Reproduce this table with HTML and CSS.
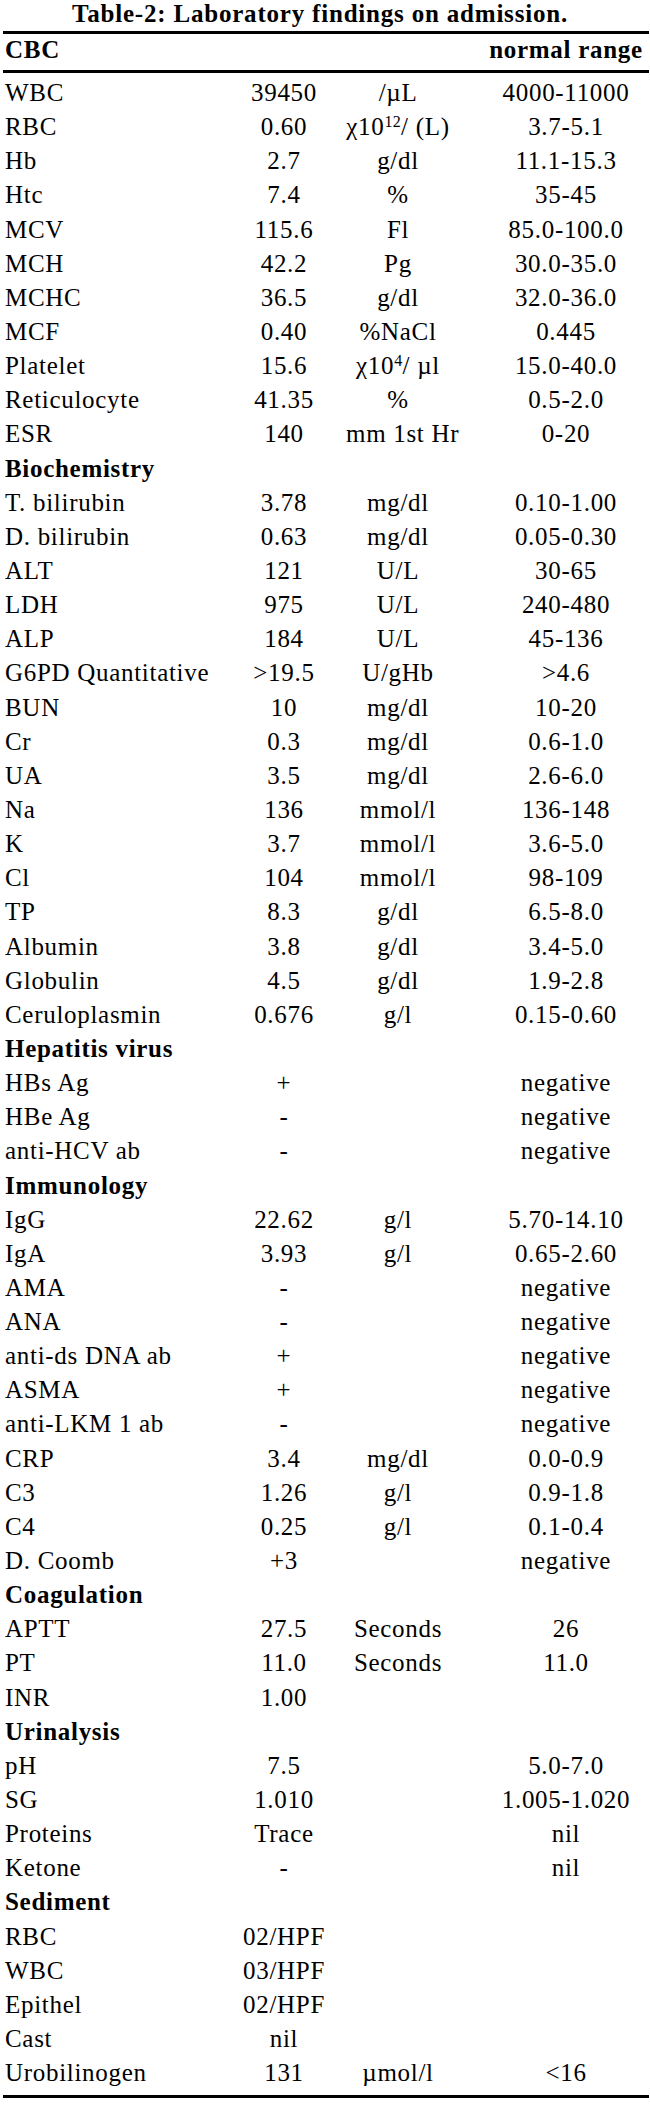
FILE: index.html
```html
<!DOCTYPE html>
<html lang="en">
<head>
<meta charset="utf-8">
<title>Table-2: Laboratory findings on admission.</title>
<link rel="stylesheet" href="styles.css">
</head>
<body>
<div class="sheet">
  <div class="title">Table-2: Laboratory findings on admission.</div>
  <div class="head row">
    <span class="name">CBC</span><span></span><span></span><span class="range">normal range</span>
  </div>
  <div class="body">
    <div class="row"><span class="name">WBC</span><span class="val">39450</span><span class="unit">/µL</span><span class="range">4000-11000</span></div>
    <div class="row"><span class="name">RBC</span><span class="val">0.60</span><span class="unit">χ10<span class="sup">12</span>/ (L)</span><span class="range">3.7-5.1</span></div>
    <div class="row"><span class="name">Hb</span><span class="val">2.7</span><span class="unit">g/dl</span><span class="range">11.1-15.3</span></div>
    <div class="row"><span class="name">Htc</span><span class="val">7.4</span><span class="unit">%</span><span class="range">35-45</span></div>
    <div class="row"><span class="name">MCV</span><span class="val">115.6</span><span class="unit">Fl</span><span class="range">85.0-100.0</span></div>
    <div class="row"><span class="name">MCH</span><span class="val">42.2</span><span class="unit">Pg</span><span class="range">30.0-35.0</span></div>
    <div class="row"><span class="name">MCHC</span><span class="val">36.5</span><span class="unit">g/dl</span><span class="range">32.0-36.0</span></div>
    <div class="row"><span class="name">MCF</span><span class="val">0.40</span><span class="unit">%NaCl</span><span class="range">0.445</span></div>
    <div class="row"><span class="name">Platelet</span><span class="val">15.6</span><span class="unit">χ10<span class="sup">4</span>/ µl</span><span class="range">15.0-40.0</span></div>
    <div class="row"><span class="name">Reticulocyte</span><span class="val">41.35</span><span class="unit">%</span><span class="range">0.5-2.0</span></div>
    <div class="row"><span class="name">ESR</span><span class="val">140</span><span class="unit">mm 1st Hr</span><span class="range">0-20</span></div>
    <div class="row section"><span class="name">Biochemistry</span></div>
    <div class="row"><span class="name">T. bilirubin</span><span class="val">3.78</span><span class="unit">mg/dl</span><span class="range">0.10-1.00</span></div>
    <div class="row"><span class="name">D. bilirubin</span><span class="val">0.63</span><span class="unit">mg/dl</span><span class="range">0.05-0.30</span></div>
    <div class="row"><span class="name">ALT</span><span class="val">121</span><span class="unit">U/L</span><span class="range">30-65</span></div>
    <div class="row"><span class="name">LDH</span><span class="val">975</span><span class="unit">U/L</span><span class="range">240-480</span></div>
    <div class="row"><span class="name">ALP</span><span class="val">184</span><span class="unit">U/L</span><span class="range">45-136</span></div>
    <div class="row"><span class="name">G6PD Quantitative</span><span class="val">&gt;19.5</span><span class="unit">U/gHb</span><span class="range">&gt;4.6</span></div>
    <div class="row"><span class="name">BUN</span><span class="val">10</span><span class="unit">mg/dl</span><span class="range">10-20</span></div>
    <div class="row"><span class="name">Cr</span><span class="val">0.3</span><span class="unit">mg/dl</span><span class="range">0.6-1.0</span></div>
    <div class="row"><span class="name">UA</span><span class="val">3.5</span><span class="unit">mg/dl</span><span class="range">2.6-6.0</span></div>
    <div class="row"><span class="name">Na</span><span class="val">136</span><span class="unit">mmol/l</span><span class="range">136-148</span></div>
    <div class="row"><span class="name">K</span><span class="val">3.7</span><span class="unit">mmol/l</span><span class="range">3.6-5.0</span></div>
    <div class="row"><span class="name">Cl</span><span class="val">104</span><span class="unit">mmol/l</span><span class="range">98-109</span></div>
    <div class="row"><span class="name">TP</span><span class="val">8.3</span><span class="unit">g/dl</span><span class="range">6.5-8.0</span></div>
    <div class="row"><span class="name">Albumin</span><span class="val">3.8</span><span class="unit">g/dl</span><span class="range">3.4-5.0</span></div>
    <div class="row"><span class="name">Globulin</span><span class="val">4.5</span><span class="unit">g/dl</span><span class="range">1.9-2.8</span></div>
    <div class="row"><span class="name">Ceruloplasmin</span><span class="val">0.676</span><span class="unit">g/l</span><span class="range">0.15-0.60</span></div>
    <div class="row section"><span class="name">Hepatitis virus</span></div>
    <div class="row"><span class="name">HBs Ag</span><span class="val">+</span><span class="unit"></span><span class="range">negative</span></div>
    <div class="row"><span class="name">HBe Ag</span><span class="val">-</span><span class="unit"></span><span class="range">negative</span></div>
    <div class="row"><span class="name">anti-HCV ab</span><span class="val">-</span><span class="unit"></span><span class="range">negative</span></div>
    <div class="row section"><span class="name">Immunology</span></div>
    <div class="row"><span class="name">IgG</span><span class="val">22.62</span><span class="unit">g/l</span><span class="range">5.70-14.10</span></div>
    <div class="row"><span class="name">IgA</span><span class="val">3.93</span><span class="unit">g/l</span><span class="range">0.65-2.60</span></div>
    <div class="row"><span class="name">AMA</span><span class="val">-</span><span class="unit"></span><span class="range">negative</span></div>
    <div class="row"><span class="name">ANA</span><span class="val">-</span><span class="unit"></span><span class="range">negative</span></div>
    <div class="row"><span class="name">anti-ds DNA ab</span><span class="val">+</span><span class="unit"></span><span class="range">negative</span></div>
    <div class="row"><span class="name">ASMA</span><span class="val">+</span><span class="unit"></span><span class="range">negative</span></div>
    <div class="row"><span class="name">anti-LKM 1 ab</span><span class="val">-</span><span class="unit"></span><span class="range">negative</span></div>
    <div class="row"><span class="name">CRP</span><span class="val">3.4</span><span class="unit">mg/dl</span><span class="range">0.0-0.9</span></div>
    <div class="row"><span class="name">C3</span><span class="val">1.26</span><span class="unit">g/l</span><span class="range">0.9-1.8</span></div>
    <div class="row"><span class="name">C4</span><span class="val">0.25</span><span class="unit">g/l</span><span class="range">0.1-0.4</span></div>
    <div class="row"><span class="name">D. Coomb</span><span class="val">+3</span><span class="unit"></span><span class="range">negative</span></div>
    <div class="row section"><span class="name">Coagulation</span></div>
    <div class="row"><span class="name">APTT</span><span class="val">27.5</span><span class="unit">Seconds</span><span class="range">26</span></div>
    <div class="row"><span class="name">PT</span><span class="val">11.0</span><span class="unit">Seconds</span><span class="range">11.0</span></div>
    <div class="row"><span class="name">INR</span><span class="val">1.00</span><span class="unit"></span><span class="range"></span></div>
    <div class="row section"><span class="name">Urinalysis</span></div>
    <div class="row"><span class="name">pH</span><span class="val">7.5</span><span class="unit"></span><span class="range">5.0-7.0</span></div>
    <div class="row"><span class="name">SG</span><span class="val">1.010</span><span class="unit"></span><span class="range">1.005-1.020</span></div>
    <div class="row"><span class="name">Proteins</span><span class="val">Trace</span><span class="unit"></span><span class="range">nil</span></div>
    <div class="row"><span class="name">Ketone</span><span class="val">-</span><span class="unit"></span><span class="range">nil</span></div>
    <div class="row section"><span class="name">Sediment</span></div>
    <div class="row"><span class="name">RBC</span><span class="val">02/HPF</span><span class="unit"></span><span class="range"></span></div>
    <div class="row"><span class="name">WBC</span><span class="val">03/HPF</span><span class="unit"></span><span class="range"></span></div>
    <div class="row"><span class="name">Epithel</span><span class="val">02/HPF</span><span class="unit"></span><span class="range"></span></div>
    <div class="row"><span class="name">Cast</span><span class="val">nil</span><span class="unit"></span><span class="range"></span></div>
    <div class="row"><span class="name">Urobilinogen</span><span class="val">131</span><span class="unit">µmol/l</span><span class="range">&lt;16</span></div>
  </div>
</div>
</body>
</html>
```

FILE: styles.css
```css
html, body {
  margin: 0;
  padding: 0;
  background: #ffffff;
}

body {
  font-family: "Liberation Serif", "Times New Roman", serif;
  font-size: 25px;
  color: #000000;
  letter-spacing: 0.7px;
}

.sheet {
  width: 646px;
  margin-left: 3px;
}

.title {
  height: 31px;
  line-height: 28px;
  text-align: center;
  font-weight: bold;
  letter-spacing: 0.8px;
  padding-right: 12px;
  white-space: nowrap;
}

.row {
  display: grid;
  grid-template-columns: 219px 124px 104px 199px;
  height: 34.15px;
  line-height: 34.15px;
  white-space: nowrap;
}

.head {
  border-top: 3px solid #000;
  border-bottom: 3px solid #000;
  height: 36px;
  line-height: 32px;
  font-weight: bold;
}

.body {
  padding-top: 3px;
  padding-bottom: 5px;
  border-bottom: 3px solid #000;
}

.name {
  padding-left: 2px;
  text-align: left;
}

.val,
.unit {
  text-align: center;
}

.range {
  text-align: center;
  padding-left: 33px;
}

.section .name {
  font-weight: bold;
  grid-column: 1 / 3;
}

.sup {
  font-size: 16px;
  line-height: 0;
  vertical-align: 8px;
  letter-spacing: 0.3px;
}
```
